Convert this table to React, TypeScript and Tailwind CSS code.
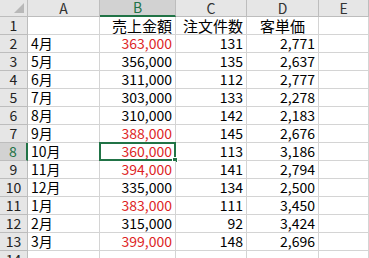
const rows: [string, string, string, string, boolean][] = [
  ['4月', '363,000', '131', '2,771', true],
  ['5月', '356,000', '135', '2,637', false],
  ['6月', '311,000', '112', '2,777', false],
  ['7月', '303,000', '133', '2,278', false],
  ['8月', '310,000', '142', '2,183', false],
  ['9月', '388,000', '145', '2,676', true],
  ['10月', '360,000', '113', '3,186', true],
  ['11月', '394,000', '141', '2,794', true],
  ['12月', '335,000', '134', '2,500', false],
  ['1月', '383,000', '111', '3,450', true],
  ['2月', '315,000', '92', '3,424', false],
  ['3月', '399,000', '148', '2,696', true],
]

const font = { fontFamily: '"Noto Sans CJK JP", "Noto Sans", sans-serif' }

const cols = 'grid grid-cols-[28px_72px_76px_71px_72px_1fr]'
const cell = 'h-[18px] border-r border-b border-[#d4d4d4] bg-white text-[14px] leading-[17px] px-[3px] overflow-hidden whitespace-nowrap text-black'
const rowHead = 'h-[18px] border-r border-b border-[#bdbdbd] bg-[#e6e6e6] text-[14px] leading-[17px] text-center text-[#222]'

function ColHead({ label, active }: { label: string; active?: boolean }) {
  return (
    <div
      className={
        active
          ? 'h-[17px] border-r border-[#bdbdbd] border-b-2 border-b-[#217346] bg-[#d2d2d2] text-[14px] leading-[15px] text-center text-[#217346]'
          : 'h-[17px] border-r border-b border-[#bdbdbd] bg-[#e6e6e6] text-[14px] leading-[16px] text-center text-[#333]'
      }
    >
      {label}
    </div>
  )
}

export default function App() {
  return (
    <div className="w-[369px] h-[258px] overflow-hidden bg-white" style={font}>
      <div className={cols}>
        <div className="h-[17px] relative border-r border-b border-[#bdbdbd] bg-[#e6e6e6]">
          <div className="absolute right-[3px] bottom-[3px] w-0 h-0 border-l-[10px] border-l-transparent border-b-[10px] border-b-[#b8b8b8]" />
        </div>
        <ColHead label="A" />
        <ColHead label="B" active />
        <ColHead label="C" />
        <ColHead label="D" />
        <ColHead label="E" />

        <div className={rowHead}>1</div>
        <div className={cell} />
        <div className={cell + ' text-right text-[15px] px-[2px]'}>売上金額</div>
        <div className={cell + ' text-right text-[15px] px-[2px]'}>注文件数</div>
        <div className={cell + ' text-center text-[15px]'}>客単価</div>
        <div className={cell} />

        {rows.map(([m, sales, orders, unit, red], i) => {
          const n = i + 2
          const sel = n === 8
          return [
            <div
              key={`h${n}`}
              className={
                sel
                  ? 'h-[18px] border-r-2 border-r-[#217346] border-b border-[#bdbdbd] bg-[#d2d2d2] text-[14px] leading-[17px] text-center text-[#217346]'
                  : rowHead
              }
            >
              {n}
            </div>,
            <div key={`a${n}`} className={cell}>{m}</div>,
            <div key={`b${n}`} className={cell + ' text-right relative overflow-visible'}>
              <span className={red ? 'text-[#dd1f26]' : 'text-black'}>{sales}</span>
              {sel && (
                <div className="absolute -left-[1px] -top-[1px] w-[77px] h-[19px] border-2 border-[#217346] pointer-events-none">
                  <div className="absolute -right-[4px] -bottom-[4px] w-[6px] h-[6px] bg-[#217346] border border-white" />
                </div>
              )}
            </div>,
            <div key={`c${n}`} className={cell + ' text-right'}>{orders}</div>,
            <div key={`d${n}`} className={cell + ' text-right'}>{unit}</div>,
            <div key={`e${n}`} className={cell} />,
          ]
        })}

        <div className={rowHead}>14</div>
        <div className={cell} />
        <div className={cell} />
        <div className={cell} />
        <div className={cell} />
        <div className={cell} />
      </div>
    </div>
  )
}
